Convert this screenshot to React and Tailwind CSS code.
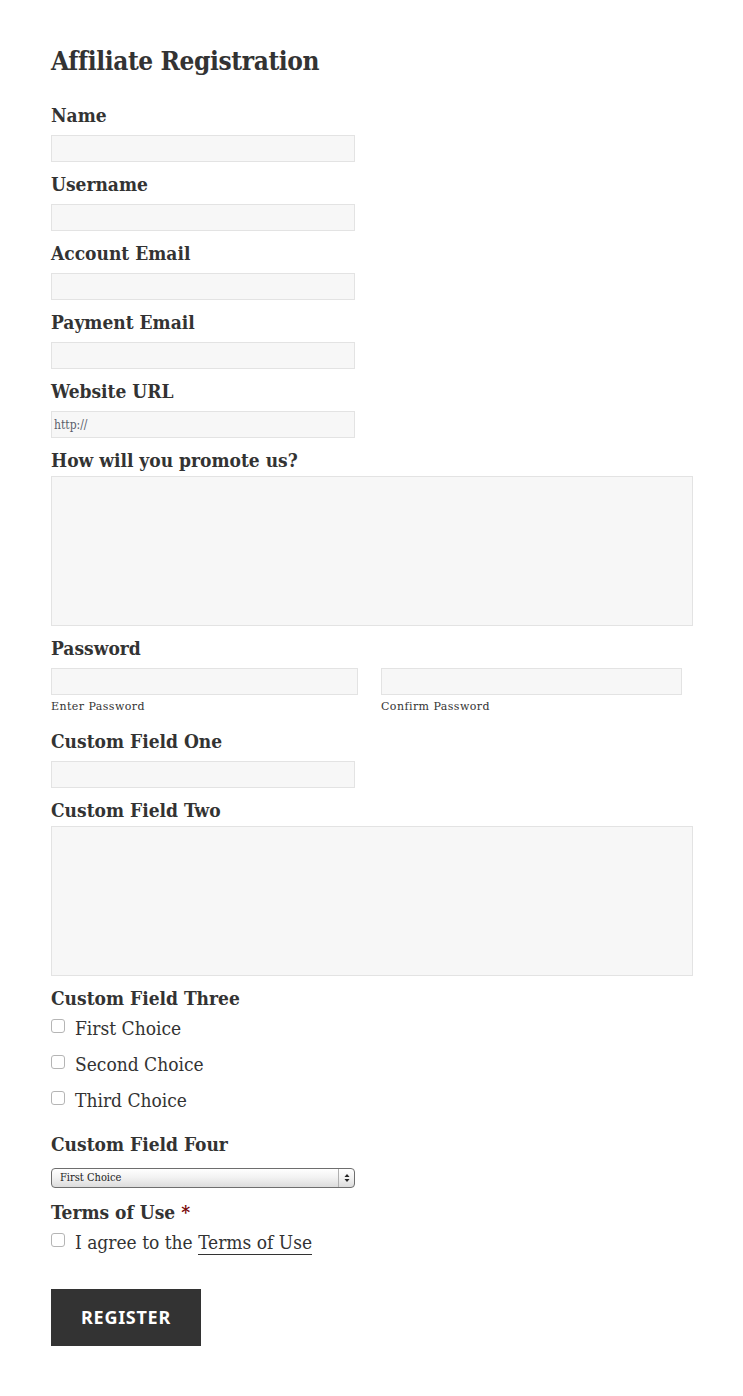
const serif = {
  fontFamily: '"DejaVu Serif Condensed", "DejaVu Serif", "Liberation Serif", serif',
  fontStretch: "semi-condensed",
};

const wideSerif = {
  fontFamily: '"DejaVu Serif", "Liberation Serif", serif',
  fontStretch: "normal",
};

function Label({ children, tight }) {
  return (
    <label
      className={`block text-[19px] font-bold leading-[24px] text-[#333] ${tight ? "mb-[4px]" : "mb-[8px]"}`}
    >
      {children}
    </label>
  );
}

function TextInput({ placeholder, w = "w-[304px]" }) {
  return (
    <input
      type="text"
      placeholder={placeholder}
      className={`block h-[27px] ${w} border border-[#e3e3e3] bg-[#f7f7f7] px-[2px] text-[12px] text-[#333] placeholder:text-[#5a5f6b] outline-none`}
      style={serif}
    />
  );
}

function Field({ label, placeholder }) {
  return (
    <div className="mb-[10px]">
      <Label>{label}</Label>
      <TextInput placeholder={placeholder} />
    </div>
  );
}

function Area({ label }) {
  return (
    <div className="mb-[10px]">
      <Label tight>{label}</Label>
      <textarea className="block h-[150px] w-[642px] resize-none border border-[#e3e3e3] bg-[#f7f7f7] outline-none" />
    </div>
  );
}

function Check({ children }) {
  return (
    <label className="flex h-[36px] items-start text-[19px] leading-[36px] text-[#333]">
      <input
        type="checkbox"
        className="mt-[9px] mr-[10px] h-[14px] w-[14px] shrink-0 appearance-none rounded-[3px] border border-[#b5b5b5] bg-white"
      />
      <span>{children}</span>
    </label>
  );
}

export default function App() {
  return (
    <div className="min-h-[1396px] bg-white px-[51px] pt-[43px] text-[#333]" style={serif}>
      <h2 className="mb-[24px] text-[26px] font-bold leading-[36px] tracking-[-0.015em]">Affiliate Registration</h2>

      <Field label="Name" />
      <Field label="Username" />
      <Field label="Account Email" />
      <Field label="Payment Email" />
      <Field label="Website URL" placeholder="http://" />
      <Area label="How will you promote us?" />

      <div className="mb-[10px]">
        <Label>Password</Label>
        <div className="flex">
          <div className="w-[307px]">
            <TextInput w="w-[307px]" />
            <p className="h-[24px] pt-[4px] text-[11px] leading-[16px] tracking-[0.04em]" style={wideSerif}>
              Enter Password
            </p>
          </div>
          <div className="ml-[23px] w-[301px]">
            <TextInput w="w-[301px]" />
            <p className="h-[24px] pt-[4px] text-[11px] leading-[16px] tracking-[0.04em]" style={wideSerif}>
              Confirm Password
            </p>
          </div>
        </div>
      </div>

      <Field label="Custom Field One" />
      <Area label="Custom Field Two" />

      <div className="mb-[14px]">
        <Label tight>Custom Field Three</Label>
        <div className="-mt-[4px]">
          <Check>First Choice</Check>
          <Check>Second Choice</Check>
          <Check>Third Choice</Check>
        </div>
      </div>

      <div className="mb-[12px]">
        <label className="mb-[12px] block text-[19px] font-bold leading-[24px]">Custom Field Four</label>
        <div className="flex h-[20px] w-[304px] items-stretch overflow-hidden rounded-[4px] border border-[#6e6e6e] bg-gradient-to-b from-white via-[#f1f1f1] to-[#dcdcdc]">
          <span className="flex-1 pl-[8px] text-[11px] leading-[18px] text-[#222]">First Choice</span>
          <span className="flex w-[16px] items-center justify-center border-l border-[#b0b0b0]">
            <svg width="6" height="10" viewBox="0 0 6 10">
              <path d="M3 1 L5.5 4 H0.5 Z" fill="#222" />
              <path d="M3 9 L5.5 6 H0.5 Z" fill="#222" />
            </svg>
          </span>
        </div>
      </div>

      <div>
        <label className="block text-[19px] font-bold leading-[24px]">
          Terms of Use <span className="text-[#7a0a0a]">*</span>
        </label>
        <Check>
          I agree to the{" "}
          <a href="#" className="border-b border-[#333] pb-[1px] leading-[22px] text-[#333]">
            Terms of Use
          </a>
        </Check>
      </div>

      <button
        className="mt-[29px] h-[57px] w-[150px] bg-[#333] text-[18px] font-bold uppercase tracking-[0.04em] text-white"
        style={{ fontFamily: '"Noto Sans", "Open Sans", sans-serif' }}
      >
        Register
      </button>
    </div>
  );
}
